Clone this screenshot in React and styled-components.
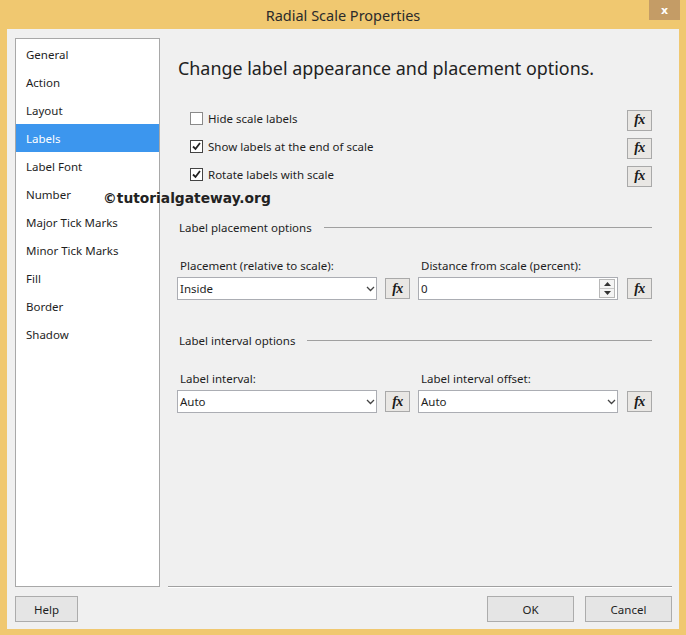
import React from "react";
import styled, { createGlobalStyle } from "styled-components";

const GlobalStyle = createGlobalStyle`
  html, body {
    margin: 0;
    padding: 0;
    background: #f0c870;
  }
  * {
    box-sizing: border-box;
  }
`;

const pages = [
  "General",
  "Action",
  "Layout",
  "Labels",
  "Label Font",
  "Number",
  "Major Tick Marks",
  "Minor Tick Marks",
  "Fill",
  "Border",
  "Shadow",
];

const checks = [
  { label: "Hide scale labels", checked: false },
  { label: "Show labels at the end of scale", checked: true },
  { label: "Rotate labels with scale", checked: true },
];

const Check = ({ checked }) => (
  <CheckBox checked={checked}>
    {checked && (
      <svg width="11" height="11" viewBox="0 0 11 11">
        <path d="M2 5.5 L4.5 8 L9 2" fill="none" stroke="#222" strokeWidth="1.8" />
      </svg>
    )}
  </CheckBox>
);

const Fx = () => (
  <FxButton>
    <span>fx</span>
  </FxButton>
);

const Chevron = () => (
  <svg width="9" height="6" viewBox="0 0 9 6">
    <path d="M1 1 L4.5 4.5 L8 1" fill="none" stroke="#444" strokeWidth="1.3" />
  </svg>
);

const Select = ({ value }) => (
  <Field>
    <FieldText>{value}</FieldText>
    <Chevron />
  </Field>
);

const Spinner = () => (
  <Spin>
    <SpinHalf>
      <svg width="7" height="4" viewBox="0 0 7 4">
        <path d="M0 4 L3.5 0 L7 4 Z" fill="#333" />
      </svg>
    </SpinHalf>
    <SpinHalf>
      <svg width="7" height="4" viewBox="0 0 7 4">
        <path d="M0 0 L3.5 4 L7 0 Z" fill="#333" />
      </svg>
    </SpinHalf>
  </Spin>
);

export default function App() {
  return (
    <>
      <GlobalStyle />
      <Window>
        <TitleBar>
          <span />
          <Title>Radial Scale Properties</Title>
          <CloseCell>
            <Close>x</Close>
          </CloseCell>
        </TitleBar>
        <Client>
          <Watermark>©tutorialgateway.org</Watermark>
          <Body>
            <PageList>
              {pages.map((p) => (
                <PageItem key={p} selected={p === "Labels"}>
                  {p}
                </PageItem>
              ))}
            </PageList>
            <Panel>
              <Heading>Change label appearance and placement options.</Heading>
              <Checks>
                {checks.map((c) => (
                  <CheckRow key={c.label}>
                    <CheckLabel>
                      <Check checked={c.checked} />
                      {c.label}
                    </CheckLabel>
                    <Fx />
                  </CheckRow>
                ))}
              </Checks>

              <Section space={29}>
                <SectionTitle>Label placement options</SectionTitle>
                <Rule />
              </Section>
              <FormGrid>
                <FieldLabel>Placement (relative to scale):</FieldLabel>
                <span />
                <FieldLabel>Distance from scale (percent):</FieldLabel>
                <span />
                <Select value="Inside" />
                <Fx />
                <Field>
                  <FieldText>0</FieldText>
                  <Spinner />
                </Field>
                <Fx />
              </FormGrid>

              <Section space={30}>
                <SectionTitle>Label interval options</SectionTitle>
                <Rule />
              </Section>
              <FormGrid>
                <FieldLabel>Label interval:</FieldLabel>
                <span />
                <FieldLabel>Label interval offset:</FieldLabel>
                <span />
                <Select value="Auto" />
                <Fx />
                <Select value="Auto" />
                <Fx />
              </FormGrid>
            </Panel>
          </Body>
          <Footer>
            <DialogButton wide={63}>Help</DialogButton>
            <Spacer />
            <DialogButton wide={87}>OK</DialogButton>
            <DialogButton wide={87}>Cancel</DialogButton>
          </Footer>
        </Client>
      </Window>
    </>
  );
}

const Window = styled.div`
  width: 686px;
  height: 635px;
  display: flex;
  flex-direction: column;
  background: #f0c870;
  font-family: "Noto Sans", "Open Sans", sans-serif;
  font-size: 11.5px;
  color: #1e1e1e;
`;

const TitleBar = styled.div`
  height: 31px;
  display: grid;
  grid-template-columns: 1fr auto 1fr;
  align-items: center;
`;

const Title = styled.div`
  font-size: 14.5px;
  color: #2b2b2b;
  padding-top: 1px;
`;

const CloseCell = styled.div`
  align-self: start;
  display: flex;
  justify-content: flex-end;
  padding-right: 6px;
`;

const Close = styled.div`
  width: 31px;
  height: 20px;
  background: #c49c66;
  color: #fff;
  font-family: "DejaVu Sans", sans-serif;
  font-weight: bold;
  font-size: 11px;
  display: flex;
  align-items: center;
  justify-content: center;
`;

const Client = styled.div`
  position: relative;
  flex: 1;
  margin: 0 7px 6px 7px;
  background: #f0f0f0;
  display: flex;
  flex-direction: column;
  padding: 9px 7px 7px 8px;
`;

const Watermark = styled.div`
  position: absolute;
  left: 96px;
  top: 161px;
  font-family: "DejaVu Sans", sans-serif;
  font-weight: bold;
  font-size: 13.8px;
  color: #222;
  z-index: 2;
`;

const Body = styled.div`
  display: grid;
  grid-template-columns: 145px 1fr;
  gap: 8px;
  height: 549px;
`;

const PageList = styled.div`
  background: #fff;
  border: 1px solid #a8a8a8;
  padding-top: 1px;
`;

const PageItem = styled.div`
  height: 28px;
  line-height: 26px;
  padding: 2px 0 0 10px;
  background: ${(p) => (p.selected ? "#3c96ee" : "transparent")};
  color: ${(p) => (p.selected ? "#fff" : "#1e1e1e")};
`;

const Panel = styled.div`
  border-bottom: 1px solid #a0a0a0;
  box-shadow: 0 1px 0 #fff;
  padding: 16px 20px 0 10px;
  display: flex;
  flex-direction: column;
`;

const Heading = styled.div`
  font-size: 17.9px;
  color: #222;
  height: 28px;
  line-height: 28px;
`;

const Checks = styled.div`
  margin-top: 22px;
  display: flex;
  flex-direction: column;
`;

const CheckRow = styled.div`
  height: 28px;
  display: flex;
  align-items: center;
  justify-content: space-between;
  padding-left: 12px;
  & > :last-child {
    margin-top: 4px;
  }
`;

const CheckLabel = styled.label`
  display: flex;
  align-items: center;
  gap: 5px;
`;

const CheckBox = styled.span`
  width: 13px;
  height: 13px;
  border: 1px solid ${(p) => (p.checked ? "#444" : "#8a8a8a")};
  background: #fff;
  display: flex;
  align-items: center;
  justify-content: center;
`;

const FxButton = styled.div`
  width: 25px;
  height: 21px;
  border: 1px solid #a9a9a9;
  background: #e9e7e4;
  display: flex;
  align-items: center;
  justify-content: center;
  font-family: "Liberation Serif", serif;
  font-style: italic;
  font-weight: bold;
  font-size: 14px;
  color: #1a1a1a;
  letter-spacing: -0.5px;
`;

const Section = styled.div`
  display: flex;
  align-items: center;
  gap: 12px;
  margin-top: ${(p) => p.space}px;
  padding-left: 1px;
  height: 20px;
`;

const SectionTitle = styled.div`
  white-space: nowrap;
`;

const Rule = styled.div`
  flex: 1;
  height: 1px;
  background: #a0a0a0;
`;

const FormGrid = styled.div`
  display: grid;
  grid-template-columns: 200px 25px 200px 26px;
  column-gap: 8px;
  row-gap: 3px;
  margin: 20px 0 0 -1px;
  align-items: center;
  & > :nth-child(4n) {
    justify-self: end;
  }
`;

const FieldLabel = styled.div`
  padding-left: 3px;
  height: 17px;
  line-height: 17px;
  white-space: nowrap;
`;

const Field = styled.div`
  height: 23px;
  border: 1px solid #abadb3;
  background: #fff;
  display: flex;
  align-items: center;
  justify-content: space-between;
  padding: 0 1px 0 2px;
`;

const FieldText = styled.span`
  flex: 1;
`;

const Spin = styled.div`
  width: 16px;
  height: 19px;
  display: flex;
  flex-direction: column;
  border: 1px solid #b8b8b8;
  margin-right: 1px;
`;

const SpinHalf = styled.div`
  flex: 1;
  display: flex;
  align-items: center;
  justify-content: center;
  background: #f4f4f4;
  & + & {
    border-top: 1px solid #c8c8c8;
  }
`;

const Footer = styled.div`
  display: flex;
  gap: 11px;
  margin-top: 9px;
`;

const Spacer = styled.div`
  flex: 1;
`;

const DialogButton = styled.div`
  width: ${(p) => p.wide}px;
  height: 26px;
  border: 1px solid #acacac;
  background: #e5e5e5;
  display: flex;
  align-items: center;
  justify-content: center;
  color: #1e1e1e;
`;
